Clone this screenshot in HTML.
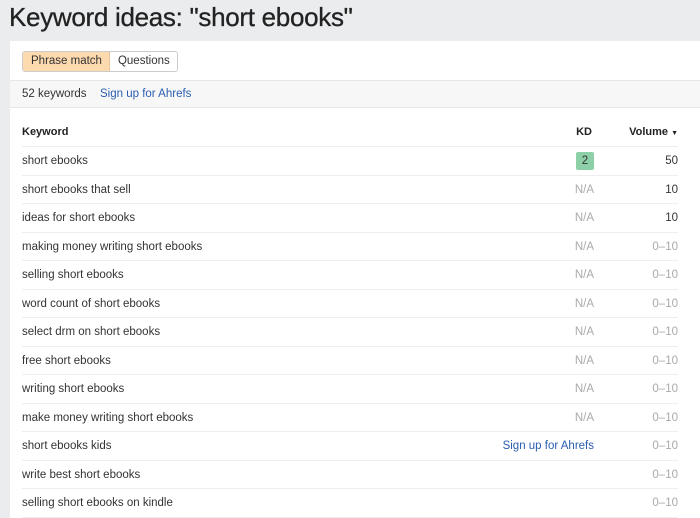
<!DOCTYPE html>
<html><head><style>
body{margin:0;width:700px;height:518px;overflow:hidden;background:#ebecee;font-family:"Liberation Sans",sans-serif;color:#333;}
h1{margin:0;position:absolute;left:9px;top:2px;font-size:26px;font-weight:normal;color:#222;letter-spacing:-0.3px;-webkit-text-stroke:0.3px #222}
.card{position:absolute;left:10px;top:41px;width:690px;height:477px;background:#fff}
.btns{position:absolute;left:12px;top:10px;display:flex;font-size:11.5px;border:1px solid #ccc;border-radius:3px;overflow:hidden}
.btns div{height:19px;line-height:19px;padding:0 7px 0 8px}
.b1{background:#fdd9ae;border-right:1px solid #e8c49c}
.bar{position:absolute;left:0;top:39px;width:690px;height:26px;background:#f7f7f7;border-top:1px solid #e6e6e6;border-bottom:1px solid #e6e6e6;font-size:11.5px;line-height:26px}
.bar span{position:absolute;left:12px}.bar a{position:absolute;left:90px;color:#2a5db0;text-decoration:none}
.t{position:absolute;left:12px;top:77px;width:656px;font-size:11.5px}
.r{position:relative;height:28.5px;line-height:28px;border-bottom:1px solid #eee;box-sizing:border-box}
.h{height:29px;font-weight:bold;color:#222;font-size:11px}
.kd{position:absolute;right:84px;top:0}
.v{position:absolute;right:0;top:0}
.na{color:#aaa}
.g{display:inline-block;background:#8dd0a8;color:#333;width:18px;height:18px;line-height:18px;text-align:center;border-radius:2px}
a.s{color:#2a5db0;text-decoration:none;white-space:nowrap}
</style></head><body>
<h1>Keyword ideas: "short ebooks"</h1>
<div class="card">
<div class="btns"><div class="b1">Phrase match</div><div>Questions</div></div>
<div class="bar"><span>52 keywords</span><a>Sign up for Ahrefs</a></div>
<div class="t">
<div class="r h">Keyword<span class="kd" style="right:86px">KD</span><span class="v">Volume <span style="font-size:7px">▼</span></span></div>
<div class="r">short ebooks<span class="kd"><span class="g">2</span></span><span class="v">50</span></div>
<div class="r">short ebooks that sell<span class="kd na">N/A</span><span class="v">10</span></div>
<div class="r">ideas for short ebooks<span class="kd na">N/A</span><span class="v">10</span></div>
<div class="r">making money writing short ebooks<span class="kd na">N/A</span><span class="v na">0–10</span></div>
<div class="r">selling short ebooks<span class="kd na">N/A</span><span class="v na">0–10</span></div>
<div class="r">word count of short ebooks<span class="kd na">N/A</span><span class="v na">0–10</span></div>
<div class="r">select drm on short ebooks<span class="kd na">N/A</span><span class="v na">0–10</span></div>
<div class="r">free short ebooks<span class="kd na">N/A</span><span class="v na">0–10</span></div>
<div class="r">writing short ebooks<span class="kd na">N/A</span><span class="v na">0–10</span></div>
<div class="r">make money writing short ebooks<span class="kd na">N/A</span><span class="v na">0–10</span></div>
<div class="r">short ebooks kids<span class="kd"><a class="s">Sign up for Ahrefs</a></span><span class="v na">0–10</span></div>
<div class="r">write best short ebooks<span class="v na">0–10</span></div>
<div class="r">selling short ebooks on kindle<span class="v na">0–10</span></div>
</div>
</div>
</body></html>
